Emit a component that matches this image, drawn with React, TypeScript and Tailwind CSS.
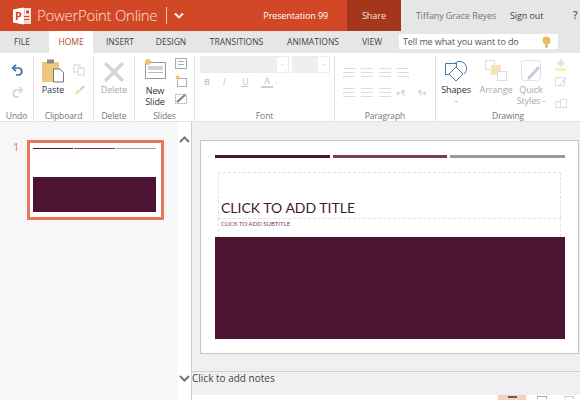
import React from "react";

const tabs = ["INSERT", "DESIGN", "TRANSITIONS", "ANIMATIONS", "VIEW"];
const tabW = ["w-[54px]", "w-[48px]", "w-[83px]", "w-[70px]", "w-[48px]"];

function Group({ w, label, children, last }: { w: string; label: string; children?: React.ReactNode; last?: boolean }) {
  return (
    <div className={`${w} h-full flex flex-col shrink-0 ${last ? "" : "border-r border-[#e2e2e2]"}`}>
      <div className="flex-1 relative flex min-h-0">{children}</div>
      <div className="h-[11px] text-center text-[8.5px] leading-[11px] text-[#777]">{label}</div>
    </div>
  );
}

function Ico({ w, h, children, cls = "" }: { w: number; h: number; children: React.ReactNode; cls?: string }) {
  return (
    <svg width={w} height={h} viewBox={`0 0 ${w} ${h}`} fill="none" className={`block shrink-0 ${cls}`}>
      {children}
    </svg>
  );
}

function PptLogo() {
  return (
    <Ico w={20} h={20}>
      <rect x="7" y="2" width="12" height="16" fill="#f6d6cb" />
      <rect x="8.5" y="4" width="4" height="4" fill="#e98e73" />
      <rect x="13.5" y="4" width="4" height="4" fill="#d24726" stroke="#fff" strokeWidth="1" />
      <rect x="10" y="10" width="7" height="1" fill="#d24726" />
      <rect x="10" y="13" width="7" height="1" fill="#d24726" />
      <path d="M1 3.5 L12 1.5 V18.5 L1 16.5 Z" fill="#fff" />
      <text x="3" y="14" fontSize="11" fontWeight="700" fill="#d24726" fontFamily="'Open Sans',sans-serif">P</text>
    </Ico>
  );
}

function Lines({ n = 3, w = 12, c = "#dcdcdc" }: { n?: number; w?: number; c?: string }) {
  return (
    <Ico w={w} h={11}>
      {Array.from({ length: n }).map((_, i) => (
        <rect key={i} x="0" y={1 + i * 4} width={w} height="1" fill={c} />
      ))}
    </Ico>
  );
}

export default function App() {
  return (
    <div className="w-[580px] h-[400px] overflow-hidden flex flex-col bg-white font-['Open_Sans',sans-serif] whitespace-nowrap">
      {/* Title bar */}
      <div className="h-[31px] flex shrink-0">
        <div className="w-[347px] bg-[#d24726] flex items-center text-white">
          <div className="ml-[12px] w-[21px]"><PptLogo /></div>
          <div className="ml-[4px] text-[15px] tracking-[-0.3px] font-light text-[#fbe3dc] leading-none">PowerPoint Online</div>
          <div className="ml-[9px] w-px h-[17px] bg-[#f3c7ba]" />
          <Ico w={10} h={8} cls="ml-[7px]">
            <path d="M1 1.5 L5 5.5 L9 1.5" stroke="#fff" strokeWidth="1.8" />
          </Ico>
          <div className="ml-[79px] text-[9px] tracking-[-0.1px] text-white leading-none">Presentation 99</div>
        </div>
        <div className="w-[54px] bg-[#a4361b] text-[#fbe3dc] text-[9px] flex items-center justify-center">Share</div>
        <div className="flex-1 bg-[#e6e6e6] flex items-center text-[9px] tracking-[-0.1px]">
          <span className="ml-[15px] w-[78px] text-[#777]">Tiffany Grace Reyes</span>
          <span className="ml-[16px] w-[34px] text-[#444]">Sign out</span>
          <span className="ml-[29px] text-[#555] font-semibold text-[10px]">?</span>
        </div>
      </div>

      {/* Tabs */}
      <div className="h-[22px] bg-[#e6e6e6] flex items-stretch shrink-0 text-[8.5px] text-[#444]">
        <div className="w-[49px] flex items-center justify-center pr-[5px]">FILE</div>
        <div className="w-[44px] bg-white text-[#c0452a] flex items-center justify-center">HOME</div>
        {tabs.map((t, i) => (
          <div key={t} className={`${tabW[i]} flex items-center justify-center`}>{t}</div>
        ))}
        <div className="ml-[3px] mt-[3px] mb-[4px] w-[159px] bg-white flex items-center justify-between pl-[4px] pr-[7px] text-[#555] text-[9px] tracking-[-0.1px]">
          <span>Tell me what you want to do</span>
          <Ico w={9} h={12}>
            <circle cx="4.5" cy="4.5" r="4" fill="#f0b95f" />
            <rect x="3" y="8.5" width="3" height="3" fill="#c9b58c" />
          </Ico>
        </div>
      </div>

      {/* Ribbon */}
      <div className="h-[69px] pt-[3px] flex shrink-0 border-b border-[#e2e2e2] text-[9px] tracking-[-0.1px]">
        <Group w="w-[34px]" label="Undo">
          <div className="w-full flex flex-col items-center gap-[10px] pt-[8px] pl-[1px]">
            <Ico w={13} h={12}>
              <path d="M2 4 H8 A3.6 3.6 0 0 1 8 11 H5" stroke="#3f6ea6" strokeWidth="1.7" />
              <path d="M5 0.8 L1.6 4 L5 7.2" stroke="#3f6ea6" strokeWidth="1.7" />
            </Ico>
            <Ico w={13} h={12}>
              <path d="M11 4 H5 A3.6 3.6 0 0 0 5 11 H8" stroke="#c6d3e2" strokeWidth="1.5" />
              <path d="M8 0.8 L11.4 4 L8 7.2" stroke="#c6d3e2" strokeWidth="1.5" />
            </Ico>
          </div>
        </Group>
        <Group w="w-[60px]" label="Clipboard">
          <div className="w-[38px] flex flex-col items-center pt-[2px]">
            <Ico w={22} h={25}>
              <rect x="0" y="4" width="17" height="20" fill="#eec67e" />
              <rect x="5" y="1.5" width="7" height="4" fill="#8a8a8a" />
              <path d="M11.5 11 H18 L21.5 14.5 V24 H11.5 Z" fill="#fff" stroke="#777" />
            </Ico>
            <span className="leading-[13px] text-[#333]">Paste</span>
          </div>
          <div className="flex flex-col items-center gap-[9px] pt-[8px] pl-[1px]">
            <Ico w={12} h={12}>
              <rect x="1" y="1" width="6" height="7" stroke="#d5d5d5" />
              <rect x="5" y="4" width="6" height="7" fill="#fff" stroke="#d5d5d5" />
            </Ico>
            <Ico w={12} h={11}>
              <path d="M1 10 L5 4 L8 7 Z" fill="#f2dcae" />
              <path d="M7 5 L11 1" stroke="#cfcfcf" strokeWidth="2" />
            </Ico>
          </div>
        </Group>
        <Group w="w-[41px]" label="Delete">
          <div className="w-full flex flex-col items-center pt-[6px]">
            <Ico w={22} h={20}>
              <path d="M2 1 L20 19 M20 1 L2 19" stroke="#d6d6d6" strokeWidth="3.4" />
            </Ico>
            <span className="mt-[1px] leading-[13px] text-[#aaa]">Delete</span>
          </div>
        </Group>
        <Group w="w-[60px]" label="Slides">
          <div className="w-[40px] flex flex-col items-center pt-[2px]">
            <Ico w={23} h={21}>
              <rect x="1.5" y="4.5" width="20" height="16" fill="#fff" stroke="#999" />
              <rect x="4" y="8" width="15" height="4" fill="#d2d2d2" />
              <rect x="4" y="14" width="15" height="1" fill="#bbb" />
              <circle cx="4" cy="4" r="3" fill="#f3c560" />
            </Ico>
            <span className="mt-[6px] leading-[11px] text-[#333] text-center">New<br />Slide</span>
          </div>
          <div className="flex flex-col items-center gap-[6px] pt-[2px]">
            <Ico w={12} h={11}>
              <rect x="0.5" y="0.5" width="11" height="10" stroke="#aaa" />
              <rect x="3" y="3" width="6" height="1" fill="#aaa" />
              <rect x="3" y="6" width="6" height="1" fill="#aaa" />
            </Ico>
            <Ico w={12} h={12}>
              <rect x="2.5" y="3.5" width="9" height="8" stroke="#aaa" />
              <circle cx="2.5" cy="2.5" r="2" fill="#f0c377" />
            </Ico>
            <Ico w={12} h={11}>
              <rect x="0.5" y="1.5" width="11" height="9" stroke="#aaa" strokeDasharray="2 1" />
              <path d="M2 9 L10 2" stroke="#6f7f91" strokeWidth="2" />
            </Ico>
          </div>
        </Group>
        <Group w="w-[140px]" label="Font">
          <div className="w-full flex flex-col pl-[5px]">
            <div className="flex gap-[3px]">
              <div className="w-[89px] h-[17px] border border-[#ececec] bg-[#efefef] flex justify-end items-center">
                <div className="w-[11px] h-full bg-white text-center text-[7px] leading-[13px] text-[#bbb]">-</div>
              </div>
              <div className="w-[38px] h-[17px] border border-[#ececec] bg-[#efefef] flex justify-end items-center">
                <div className="w-[11px] h-full bg-white text-center text-[7px] leading-[13px] text-[#bbb]">-</div>
              </div>
            </div>
            <div className="flex items-center text-[9px] text-[#c4c4c4] pl-[4px] mt-[2px] leading-[13px]">
              <span className="font-semibold w-[19px]">B</span>
              <span className="italic w-[19px]">I</span>
              <span className="underline w-[19px]">U</span>
              <span className="border-b-2 border-[#c6cfe2] h-[13px] leading-[12px] w-[12px] text-center">A</span>
              <span className="ml-[2px] text-[7px]">-</span>
            </div>
          </div>
        </Group>
        <Group w="w-[101px]" label="Paragraph">
          <div className="w-full flex flex-col pl-[8px] pt-[11px] gap-[9px]">
            <div className="flex gap-[6px]">
              <Lines /><Lines /><Lines /><Lines />
            </div>
            <div className="flex gap-[6px] items-center">
              <Lines /><Lines /><Lines />
              <span className="text-[6.5px] leading-[11px] text-[#ccc]">▸¶</span>
              <span className="ml-[7px] text-[6.5px] leading-[11px] text-[#ccc]">¶◂</span>
            </div>
          </div>
        </Group>
        <Group w="w-[144px]" label="Drawing" last>
          <div className="w-full flex">
            <div className="w-[40px] flex flex-col items-center pt-[2px]">
              <Ico w={24} h={24}>
                <path d="M11 5 A7 7 0 1 1 20 16" stroke="#4a7ca8" />
                <rect x="1.5" y="5.5" width="11" height="11" fill="none" stroke="#4a7ca8" />
                <path d="M12 9 L19 16 L12 23 L5 16 Z" fill="#fff" stroke="#4a7ca8" />
              </Ico>
              <span className="mt-[2px] leading-[11px] text-[#333]">Shapes</span>
              <span className="text-[7px] leading-[9px] mt-[1px] text-[#444]">-</span>
            </div>
            <div className="w-[40px] flex flex-col items-center pt-[2px]">
              <Ico w={24} h={24}>
                <rect x="1.5" y="2.5" width="9" height="9" stroke="#ddd" />
                <rect x="7" y="7" width="10" height="10" fill="#f8e3bd" />
                <rect x="13.5" y="13.5" width="9" height="9" fill="#fff" stroke="#ddd" />
              </Ico>
              <span className="mt-[2px] leading-[11px] text-[#aaa]">Arrange</span>
              <span className="text-[7px] leading-[9px] mt-[1px] text-[#bbb]">-</span>
            </div>
            <div className="w-[30px] flex flex-col items-center pt-[2px]">
              <Ico w={24} h={24}>
                <rect x="2.5" y="2.5" width="19" height="20" rx="3" fill="#fff" stroke="#e2e2e2" />
                <path d="M9 21 L20 9" stroke="#c4cfdb" strokeWidth="3" />
              </Ico>
              <span className="mt-[2px] leading-[11px] text-[#aaa] text-center">Quick<br />Styles -</span>
            </div>
            <div className="flex flex-col pt-[2px] gap-[4px] ml-[8px]">
              <Ico w={14} h={13}>
                <path d="M3 6 L7 1 L11 6 L7 9 Z" fill="#e3e3e3" />
                <rect x="1" y="10" width="11" height="3" fill="#f7f3b0" />
              </Ico>
              <Ico w={14} h={13}>
                <rect x="1.5" y="2.5" width="9" height="8" stroke="#ddd" />
                <path d="M5 11 L12 3" stroke="#d5d5d5" />
              </Ico>
              <Ico w={14} h={12} cls="mt-[5px]">
                <rect x="1.5" y="4.5" width="5" height="6" stroke="#ddd" />
                <rect x="6.5" y="2.5" width="6" height="8" stroke="#ddd" />
              </Ico>
            </div>
          </div>
        </Group>
      </div>

      {/* Workspace */}
      <div className="flex-1 flex min-h-0">
        <div className="w-[178px] bg-[#f7f7f7] flex items-start pt-[18px] pl-[13px] shrink-0">
          <span className="w-[14px] text-[11px] leading-[14px] text-[#e8775a]">1</span>
          <div className="w-[137px] h-[80px] border-[3px] border-[#e8775a] bg-white flex flex-col pl-[3px] pr-[5px] pt-[5px]">
            <div className="flex gap-px">
              <div className="flex-1 h-[1px] bg-[#4d1434]" />
              <div className="flex-1 h-[1px] bg-[#7d3a5b]" />
              <div className="flex-1 h-[1px] bg-[#a5a5a5]" />
            </div>
            <div className="mt-[28px] h-[35px] bg-[#4d1434]" />
          </div>
        </div>
        <div className="w-[14px] bg-white border-r border-[#cfcfcf] flex flex-col justify-between items-center shrink-0 pt-[14px] pb-[18px] pr-[1px]">
          <Ico w={11} h={7}>
            <path d="M1 6 L5.5 1.5 L10 6" stroke="#777" strokeWidth="2" />
          </Ico>
          <Ico w={11} h={7}>
            <path d="M1 1 L5.5 5.5 L10 1" stroke="#777" strokeWidth="2" />
          </Ico>
        </div>
        <div className="flex-1 flex flex-col min-w-0">
          <div className="h-[249px] bg-[#f0f0f0] pt-[18px] pl-[8px] pr-[1px]">
            <div className="h-[214px] border border-[#c6c6c6] bg-white pt-[14px] pl-[14px] pr-[13px]">
              <div className="flex gap-[3px]">
                <div className="w-[115px] h-[3px] bg-[#4d1434]" />
                <div className="w-[115px] h-[3px] bg-[#7d3a5b]" />
                <div className="w-[115px] h-[3px] bg-[#97999d]" />
              </div>
              <div className="ml-[3px] mr-[4px] mt-[14px] h-[46px] border border-dashed border-b-0 border-[#e2e2e2] flex items-end pl-[2px]">
                <span className="text-[14px] leading-[17px] mb-[2px] text-[#45182f] font-['Lato',sans-serif]">CLICK TO ADD TITLE</span>
              </div>
              <div className="ml-[3px] mr-[4px] h-[19px] border border-dashed border-[#e2e2e2] border-b-0 pl-[2px]">
                <span className="block text-[6px] leading-[10px] text-[#7d3a5b] font-['Lato',sans-serif]">CLICK TO ADD SUBTITLE</span>
              </div>
              <div className="h-[102px] bg-[#4d1434]" />
            </div>
          </div>
          <div className="h-[24px] bg-[#f0f0f0] border-t border-[#d0d0d0] text-[10px] leading-[12px] text-[#444] flex items-start">Click to add notes</div>
          <div className="flex-1 bg-white flex pl-[306px]">
            <div className="w-[28px] bg-[#f6cfc0] flex justify-center">
              <div className="w-[9px] h-[2px] mt-[1px] bg-[#7a5a50]" />
            </div>
            <div className="ml-[11px] w-[10px] h-[3px] mt-[1px] border border-[#aaa] border-b-0" />
            <div className="ml-[17px] w-[10px] h-[3px] mt-[1px] border border-[#ccc] border-b-0" />
          </div>
        </div>
      </div>
    </div>
  );
}
